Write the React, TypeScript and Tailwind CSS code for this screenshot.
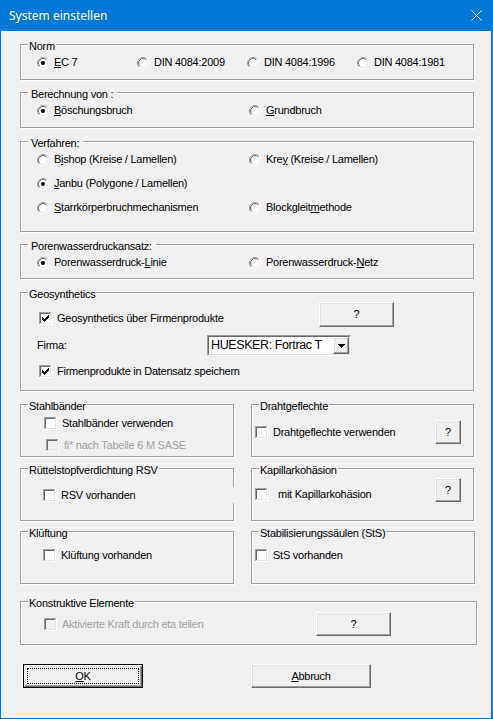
import React from 'react';

const etched = 'border border-[#a0a0a0] shadow-[inset_1px_1px_0_#fff,1px_1px_0_#fff]';
const raised =
  'border border-t-white border-l-white border-b-[#696969] border-r-[#696969] shadow-[inset_-1px_-1px_0_#a0a0a0,inset_1px_1px_0_#e3e3e3] bg-[#f0f0f0]';

const CHECK = [2, 3, 4, 3, 2, 1, 0].map((r, i) => `M${3 + i} ${3 + r}h1v3h-1z`).join('');

function Group({
  title,
  spaced,
  className = '',
  children,
}: {
  title: string;
  spaced?: boolean;
  className?: string;
  children?: React.ReactNode;
}) {
  return (
    <div className={`relative shrink-0 ${etched} ${className}`}>
      <span
        className={`absolute top-[-5px] left-[7px] bg-[#f0f0f0] whitespace-nowrap ${
          spaced ? 'pl-[3px] pr-[4px]' : 'px-px'
        }`}
      >
        {title}
      </span>
      {children}
    </div>
  );
}

function Radio({ checked }: { checked?: boolean }) {
  return (
    <svg width="12" height="12" viewBox="0 0 12 12" className="shrink-0">
      <circle cx="6" cy="6" r="5" fill="#fff" />
      <path d="M2.11 9.89A5.5 5.5 0 0 1 9.89 2.11" fill="none" stroke="#a0a0a0" />
      <path d="M9.89 2.11A5.5 5.5 0 0 1 2.11 9.89" fill="none" stroke="#fff" />
      <path d="M2.82 9.18A4.5 4.5 0 0 1 9.18 2.82" fill="none" stroke="#696969" />
      <path d="M9.18 2.82A4.5 4.5 0 0 1 2.82 9.18" fill="none" stroke="#e3e3e3" />
      {checked && <circle cx="6" cy="6" r="2" fill="#000" />}
    </svg>
  );
}

function Box({ checked, disabled }: { checked?: boolean; disabled?: boolean }) {
  return (
    <svg width="13" height="13" viewBox="0 0 13 13" className="shrink-0" shapeRendering="crispEdges">
      <path d="M0 0h12v1H1v11H0z" fill="#a0a0a0" />
      <path d="M1 1h10v1H2v9H1z" fill="#696969" />
      <path d="M12 0h1v13H0v-1h12z" fill="#fff" />
      <path d="M11 1h1v11H1v-1h10z" fill="#e3e3e3" />
      <rect x="2" y="2" width="9" height="9" fill={disabled ? '#f0f0f0' : '#fff'} />
      {checked && <path d={CHECK} fill="#000" />}
    </svg>
  );
}

function Option({
  checked,
  children,
  className = '',
}: {
  checked?: boolean;
  children: React.ReactNode;
  className?: string;
}) {
  return (
    <div className={`flex items-center gap-[5px] h-[13px] whitespace-nowrap ${className}`}>
      <Radio checked={checked} />
      <span>{children}</span>
    </div>
  );
}

function Check({
  checked,
  disabled,
  children,
  className = '',
  gap = 'gap-[5px]',
}: {
  checked?: boolean;
  disabled?: boolean;
  children: React.ReactNode;
  className?: string;
  gap?: string;
}) {
  return (
    <div className={`flex items-center h-[13px] whitespace-nowrap ${gap} ${className}`}>
      <Box checked={checked} disabled={disabled} />
      <span className={disabled ? 'text-[#a0a0a0]' : ''}>{children}</span>
    </div>
  );
}

function Btn({ children, className = '' }: { children: React.ReactNode; className?: string }) {
  return (
    <button className={`${raised} flex items-center justify-center shrink-0 ${className}`}>{children}</button>
  );
}

export default function App() {
  return (
    <div className="w-[493px] h-[719px] bg-[#0078d7] flex flex-col font-['Liberation_Sans',Arial,sans-serif] text-[11px] leading-[13px] tracking-[-0.25px] text-black">
      <div className="h-[31px] shrink-0 flex items-center pl-[9px] pr-[11px] text-white font-['Noto_Sans',sans-serif] text-[12px] tracking-normal">
        <span className="flex-1">System einstellen</span>
        <svg width="11" height="11" viewBox="0 0 11 11">
          <path d="M0.5 0.5L10.5 10.5M10.5 0.5L0.5 10.5" stroke="#fff" strokeWidth="1" />
        </svg>
      </div>

      <div className="flex-1 ml-px mr-[2px] mb-px bg-[#f0f0f0] pl-[19px] pt-[13px] flex flex-col">
        <Group title="Norm" className="w-[454px] h-[36px] pl-[16px] pt-[11px]">
          <div className="flex">
            <Option checked className="w-[100px]">
              <u>E</u>C 7
            </Option>
            <Option className="w-[110px]">DIN 4084:2009</Option>
            <Option className="w-[110px]">DIN 4084:1996</Option>
            <Option>DIN 4084:1981</Option>
          </div>
        </Group>

        <Group title="Berechnung von :" spaced className="mt-[12px] w-[454px] h-[36px] pl-[16px] pt-[11px]">
          <div className="flex">
            <Option checked className="w-[212px]">
              <u>B</u>öschungsbruch
            </Option>
            <Option>
              <u>G</u>rundbruch
            </Option>
          </div>
        </Group>

        <Group title="Verfahren:" spaced className="mt-[13px] w-[454px] h-[91px] pl-[16px] pt-[11px]">
          <div className="grid grid-cols-[212px_1fr] gap-y-[11px]">
            <Option>
              B<u>i</u>shop (Kreise / Lamellen)
            </Option>
            <Option>
              Kre<u>y</u> (Kreise / Lamellen)
            </Option>
            <Option checked>
              <u>J</u>anbu (Polygone / Lamellen)
            </Option>
            <div />
            <Option>
              <u>S</u>tarrkörperbruchmechanismen
            </Option>
            <Option>
              Blockgleit<u>m</u>ethode
            </Option>
          </div>
        </Group>

        <Group title="Porenwasserdruckansatz:" spaced className="mt-[12px] w-[454px] h-[35px] pl-[16px] pt-[11px]">
          <div className="flex">
            <Option checked className="w-[212px]">
              Porenwasserdruck-<u>L</u>inie
            </Option>
            <Option>
              Porenwasserdruck-<u>N</u>etz
            </Option>
          </div>
        </Group>

        <Group title="Geosynthetics" className="mt-[13px] w-[454px] h-[99px] pt-[9px]">
          <div className="flex items-start pl-[18px] h-[25px]">
            <Check checked className="w-[280px] mt-[10px]">
              Geosynthetics über Firmenprodukte
            </Check>
            <Btn className="w-[75px] h-[25px]">?</Btn>
          </div>
          <div className="flex items-center pl-[16px] mt-[8px]">
            <span className="w-[170px]">Firma:</span>
            <div className="w-[144px] h-[21px] border border-t-[#a0a0a0] border-l-[#a0a0a0] border-b-white border-r-white">
              <div className="h-full border border-t-[#696969] border-l-[#696969] border-b-[#e3e3e3] border-r-[#e3e3e3] bg-white flex items-center">
                <span className="flex-1 pl-[2px] whitespace-nowrap overflow-hidden text-[12.5px] leading-[15px] tracking-[-0.4px]">
                  HUESKER: Fortrac T
                </span>
                <div className={`${raised} w-[16px] h-[17px] flex items-center justify-center`}>
                  <svg width="7" height="4" viewBox="0 0 7 4" shapeRendering="crispEdges">
                    <path d="M0 0h7v1H0zM1 1h5v1H1zM2 2h3v1H2zM3 3h1v1H3z" fill="#000" />
                  </svg>
                </div>
              </div>
            </div>
          </div>
          <Check checked className="ml-[18px] mt-[9px]">
            Firmenprodukte in Datensatz speichern
          </Check>
        </Group>

        <div className="flex gap-[17px] mt-[13px]">
          <Group title="Stahlbänder" className="w-[214px] h-[53px] pl-[23px] pt-[12px]">
            <Check>Stahlbänder verwenden</Check>
            <Check disabled className="ml-[2px] mt-[9px]">
              fi* nach Tabelle 6 M SASE
            </Check>
          </Group>
          <Group title="Drahtgeflechte" className="w-[223px] h-[53px] pl-[3px] pr-[12px] pt-[15px]">
            <div className="flex items-center h-[24px]">
              <Check className="flex-1">Drahtgeflechte verwenden</Check>
              <Btn className="w-[26px] h-[24px]">?</Btn>
            </div>
          </Group>
        </div>

        <div className="flex gap-[17px] mt-[11px]">
          <Group title="Rüttelstopfverdichtung RSV" className="w-[214px] h-[53px] pl-[22px] pt-[20px]">
            <Check>RSV vorhanden</Check>
            <div className="absolute right-[-2px] top-[18px] w-[3px] h-[16px] bg-[#f0f0f0]" />
          </Group>
          <Group title="Kapillarkohäsion" className="w-[223px] h-[53px] pl-[3px] pr-[12px] pt-[9px]">
            <div className="flex items-start h-[24px]">
              <Check gap="gap-[10px]" className="flex-1 mt-[10px]">
                mit Kapillarkohäsion
              </Check>
              <Btn className="w-[26px] h-[24px]">?</Btn>
            </div>
          </Group>
        </div>

        <div className="flex gap-[17px] mt-[10px]">
          <Group title="Klüftung" className="w-[214px] h-[53px] pl-[22px] pt-[17px]">
            <Check>Klüftung vorhanden</Check>
          </Group>
          <Group title="Stabilisierungssäulen (StS)" className="w-[224px] h-[53px] pl-[3px] pt-[17px]">
            <Check>StS vorhanden</Check>
          </Group>
        </div>

        <Group title="Konstruktive Elemente" className="mt-[17px] w-[457px] h-[44px] pl-[23px] pt-[10px]">
          <div className="flex items-center h-[24px]">
            <Check disabled className="w-[272px]">
              Aktivierte Kraft durch eta teilen
            </Check>
            <Btn className="w-[75px] h-[24px]">?</Btn>
          </div>
        </Group>

        <div className="flex mt-[19px] ml-[3px] gap-[108px]">
          <button className="w-[120px] h-[24px] border border-black p-0 bg-[#f0f0f0]">
            <div className="h-full border border-t-white border-l-white border-b-[#696969] border-r-[#696969] shadow-[inset_-1px_-1px_0_#a0a0a0] p-[2px]">
              <div className="h-full border border-dotted border-black flex items-center justify-center">
                <span>
                  <u>O</u>K
                </span>
              </div>
            </div>
          </button>
          <Btn className="w-[120px] h-[24px]">
            <span>
              <u>A</u>bbruch
            </span>
          </Btn>
        </div>
      </div>
    </div>
  );
}
